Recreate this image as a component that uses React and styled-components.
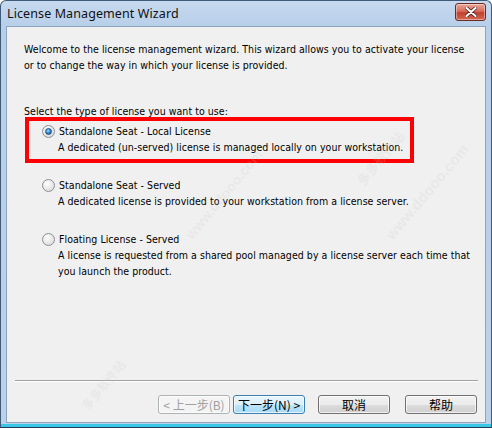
import React from 'react';
import styled, { createGlobalStyle } from 'styled-components';

const GlobalStyle = createGlobalStyle`
	html, body {
		margin: 0;
		padding: 0;
		background: #ffffff;
	}
`;

const Window = styled.div`
	position: relative;
	width: 492px;
	height: 428px;
	box-sizing: border-box;
	border: 1px solid #3f5a78;
	border-bottom: 1px solid #243a52;
	border-radius: 6px 6px 0 0;
	background: linear-gradient(to bottom, #c6d9ef 0px, #b8cfe9 26px, #bcd2eb 100%);
	display: flex;
	flex-direction: column;
	overflow: hidden;
	box-shadow: inset 0 -3px 0 #39c7e6;
	font-family: Tahoma, "DejaVu Sans", "Liberation Sans", sans-serif;
`;

const TitleBar = styled.div`
	height: 25px;
	display: flex;
	align-items: center;
	justify-content: space-between;
	padding: 0 5px 0 6px;
`;

const Title = styled.div`
	font-family: "Noto Sans", "Liberation Sans", sans-serif;
	font-size: 12.5px;
	color: #111;
	letter-spacing: 0.1px;
`;

const CloseButton = styled.div`
	width: 29px;
	height: 16px;
	margin-top: -3px;
	border: 1px solid #6b2b24;
	border-radius: 3px;
	background: linear-gradient(to bottom, #e9a99c 0%, #d86c5a 45%, #c0402c 55%, #d46b55 100%);
	display: flex;
	align-items: center;
	justify-content: center;
	box-shadow: inset 0 0 0 1px rgba(255, 255, 255, 0.4);
`;

const Client = styled.div`
	flex: 1;
	margin: 0 5px 4px 5px;
	border: 1px solid #8da3bf;
	background: #f0f0f0;
	display: flex;
	flex-direction: column;
	position: relative;
	overflow: hidden;
`;

const Content = styled.div`
	flex: 1;
	padding: 14px 20px 0 17px;
	font-size: 11px;
	color: #000;
`;

const Text = styled.p`
	margin: 0;
	line-height: 16px;
	font-family: "DejaVu Sans Condensed", "DejaVu Sans", sans-serif;
	font-size: 10.5px;
	letter-spacing: 0.05px;
	white-space: nowrap;
`;

const Prompt = styled(Text)`
	margin-top: 30px;
`;

const Options = styled.div`
	margin: 2px 0 0 5px;
	width: 381px;
	display: flex;
	flex-direction: column;
	gap: 16px;
`;

const Option = styled.div`
	padding: 2px 0 4px 13px;
	outline: ${p => (p.$highlight ? '4px solid #ff0000' : 'none')};
`;

const OptionTitle = styled.label`
	display: flex;
	align-items: center;
	gap: 4px;
	height: 16px;
	font-family: "DejaVu Sans Condensed", "DejaVu Sans", sans-serif;
	font-size: 10.5px;
	letter-spacing: 0.05px;
	white-space: nowrap;
`;

const Radio = styled.span`
	width: 11px;
	height: 11px;
	border-radius: 50%;
	border: 1px solid #8c9196;
	background: radial-gradient(circle at 40% 35%, #ffffff 0%, #e4e4e4 60%, #d2d2d2 100%);
	display: flex;
	align-items: center;
	justify-content: center;
	flex-shrink: 0;

	&::after {
		content: '';
		width: 5px;
		height: 5px;
		border-radius: 50%;
		display: ${p => (p.$checked ? 'block' : 'none')};
		background: radial-gradient(circle at 40% 35%, #a9dcff 0%, #2a7fc6 55%, #14508e 100%);
		border: 1px solid #1e4f80;
	}
`;

const Description = styled(Text)`
	padding-left: 16px;
`;

const Separator = styled.div`
	height: 1px;
	margin: 0 7px 0 8px;
	background: #a0a0a0;
	border-bottom: 1px solid #ffffff;
`;

const ButtonRow = styled.div`
	display: flex;
	justify-content: flex-end;
	padding: 13px 8px 8px 0;
`;

const Button = styled.div`
	width: 72px;
	height: 19px;
	box-sizing: border-box;
	margin-left: ${p => p.$gap || 0}px;
	border: 1px solid ${p => (p.$disabled ? '#adb2b5' : p.$focused ? '#3c7fb1' : '#707070')};
	border-radius: 3px;
	background: ${p =>
		p.$disabled
			? '#f4f4f4'
			: p.$focused
			? 'linear-gradient(to bottom, #eaf6fd 0%, #d9f0fc 50%, #bee6fd 51%, #a7d9f5 100%)'
			: 'linear-gradient(to bottom, #f2f2f2 0%, #ebebeb 50%, #dddddd 51%, #cfcfcf 100%)'};
	box-shadow: inset 0 0 0 1px rgba(255, 255, 255, 0.7);
	display: flex;
	align-items: center;
	justify-content: center;
	font-family: "Noto Sans CJK SC", "Noto Sans", sans-serif;
	font-size: 12px;
	color: ${p => (p.$disabled ? '#a0a0a0' : '#000')};
	white-space: nowrap;
`;

const Watermark = styled.span`
	position: absolute;
	left: ${p => p.$x}px;
	top: ${p => p.$y}px;
	transform: rotate(-50deg);
	transform-origin: left top;
	font-family: "Liberation Sans", "Noto Sans CJK SC", sans-serif;
	font-size: ${p => p.$size}px;
	font-weight: bold;
	color: rgba(200, 200, 200, 0.2);
	white-space: nowrap;
	pointer-events: none;
`;

const options = [
	{
		title: 'Standalone Seat - Local License',
		lines: ['A dedicated (un-served) license is managed locally on your workstation.'],
		checked: true,
	},
	{
		title: 'Standalone Seat - Served',
		lines: ['A dedicated license is provided to your workstation from a license server.'],
	},
	{
		title: 'Floating License - Served',
		lines: [
			'A license is requested from a shared pool managed by a license server each time that',
			'you launch the product.',
		],
	},
];

function CloseIcon() {
	return (
		<svg width="12" height="10" viewBox="0 0 12 10">
			<path d="M1.5 1 L10.5 9 M10.5 1 L1.5 9" stroke="#4a1a14" strokeWidth="3.6" strokeLinecap="round" />
			<path d="M1.5 1 L10.5 9 M10.5 1 L1.5 9" stroke="#ffffff" strokeWidth="2.2" strokeLinecap="round" />
		</svg>
	);
}

export default function App() {
	return (
		<>
			<GlobalStyle />
			<Window>
				<TitleBar>
					<Title>License Management Wizard</Title>
					<CloseButton>
						<CloseIcon />
					</CloseButton>
				</TitleBar>

				<Client>
					<Content>
						<Text>Welcome to the license management wizard. This wizard allows you to activate your license</Text>
						<Text>or to change the way in which your license is provided.</Text>

						<Prompt>Select the type of license you want to use:</Prompt>

						<Options>
							{options.map(opt => (
								<Option key={opt.title} $highlight={opt.checked}>
									<OptionTitle>
										<Radio $checked={opt.checked} />
										{opt.title}
									</OptionTitle>
									{opt.lines.map(line => (
										<Description key={line}>{line}</Description>
									))}
								</Option>
							))}
						</Options>
					</Content>

					<Separator />

					<ButtonRow>
						<Button $disabled>&lt; 上一步(B)</Button>
						<Button $focused $gap={3}>下一步(N) &gt;</Button>
						<Button $gap={13}>取消</Button>
						<Button $gap={15}>帮助</Button>
					</ButtonRow>

					<Watermark $x={345} $y={150} $size={13}>多多软件站</Watermark>
					<Watermark $x={375} $y={205} $size={15}>www.ddooo.com</Watermark>
					<Watermark $x={175} $y={205} $size={14}>www.ddooo.com</Watermark>
					<Watermark $x={70} $y={375} $size={12}>多多软件站</Watermark>
				</Client>
			</Window>
		</>
	);
}
